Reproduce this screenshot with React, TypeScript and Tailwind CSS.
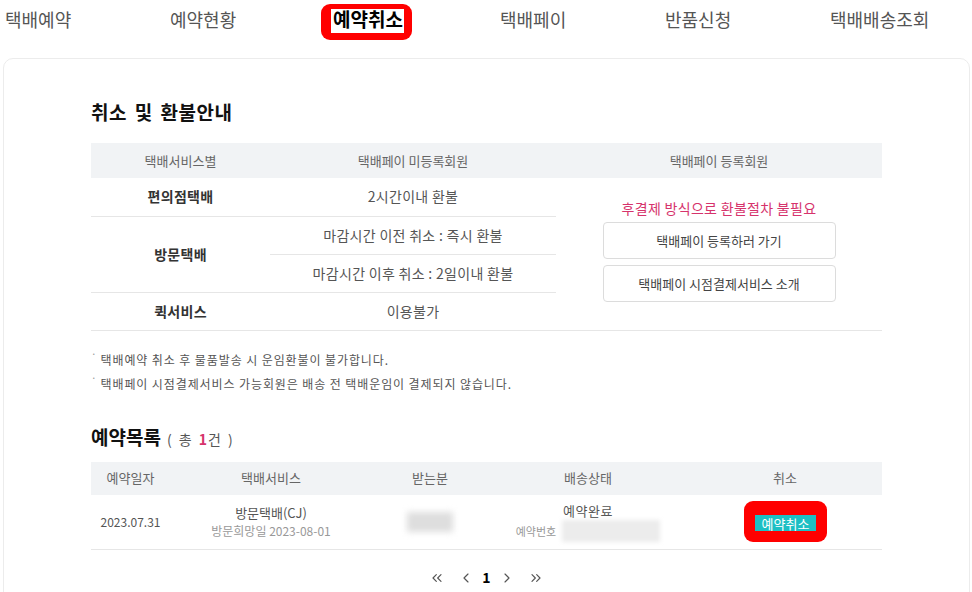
import { ChevronLeft, ChevronRight, ChevronsLeft, ChevronsRight } from 'lucide-react';

const tabs = ['택배예약', '예약현황', '예약취소', '택배페이', '반품신청', '택배배송조회'];

const notes = [
  '택배예약 취소 후 물품발송 시 운임환불이 불가합니다.',
  '택배페이 시점결제서비스 가능회원은 배송 전 택배운임이 결제되지 않습니다.',
];

export default function App() {
  return (
    <div className="min-h-[592px] bg-white font-['Noto_Sans_CJK_KR','Noto_Sans',sans-serif] text-[#333]">
      <nav className="flex h-[38px] items-center pl-[5px]">
        {tabs.map((t) => (
          <div key={t} className="w-[165px] shrink-0">
            {t === '예약취소' ? (
              <span className="relative z-0 -ml-[2px] inline-block text-[19px] font-bold leading-[24px] text-black">
                <span className="absolute -left-[12px] -right-[9px] -top-[3px] -bottom-[9px] -z-10 rounded-[9px] bg-[#ff0000]" />
                <span className="absolute -left-[2px] -right-[1px] top-[2px] -bottom-[2px] -z-10 bg-white" />
                {t}
              </span>
            ) : (
              <span className="text-[18px] leading-[24px] text-[#555]">{t}</span>
            )}
          </div>
        ))}
      </nav>

      <div className="ml-[3px] mr-[2px] mt-[20px] rounded-[10px] border border-[#ececec] px-[87px] pb-[40px] pt-[39px]">
        <h2 className="text-[19px] font-bold leading-[28px] tracking-[0.5px] text-[#111] [word-spacing:3px]">취소 및 환불안내</h2>

        <table className="mt-[17px] w-full table-fixed border-collapse text-center text-[14px] text-[#555]">
          <colgroup>
            <col className="w-[179px]" />
            <col className="w-[286px]" />
            <col />
          </colgroup>
          <thead>
            <tr className="h-[35px] bg-[#f1f3f5] text-[13px] text-[#666]">
              <th className="font-normal">택배서비스별</th>
              <th className="font-normal">택배페이 미등록회원</th>
              <th className="font-normal">택배페이 등록회원</th>
            </tr>
          </thead>
          <tbody className="tracking-[0.3px]">
            <tr className="h-[38px]">
              <td className="border-b border-[#e6e6e6] font-bold text-[#333]">편의점택배</td>
              <td className="border-b border-[#e6e6e6]">2시간이내 환불</td>
              <td rowSpan={4} className="border-b border-[#e6e6e6] pt-[21px] align-top">
                <p className="leading-[18px] text-[#d6336c]">후결제 방식으로 환불절차 불필요</p>
                <div className="mt-[5px] flex flex-col items-center gap-[6px] tracking-normal">
                  <button className="h-[37px] w-[233px] rounded-[4px] border border-[#dcdcdc] bg-white text-[13px] text-[#444]">
                    택배페이 등록하러 가기
                  </button>
                  <button className="h-[37px] w-[233px] rounded-[4px] border border-[#dcdcdc] bg-white text-[13px] text-[#444]">
                    택배페이 시점결제서비스 소개
                  </button>
                </div>
              </td>
            </tr>
            <tr className="h-[38px]">
              <td rowSpan={2} className="border-b border-[#e6e6e6] font-bold text-[#333]">방문택배</td>
              <td className="border-b border-[#e6e6e6]">마감시간 이전 취소 : 즉시 환불</td>
            </tr>
            <tr className="h-[38px]">
              <td className="border-b border-[#e6e6e6]">마감시간 이후 취소 : 2일이내 환불</td>
            </tr>
            <tr className="h-[38px]">
              <td className="border-b border-[#e6e6e6] font-bold text-[#333]">퀵서비스</td>
              <td className="border-b border-[#e6e6e6]">이용불가</td>
            </tr>
          </tbody>
        </table>

        <ul className="mt-[17px] text-[12px] leading-[24px] tracking-[0.9px] text-[#555]">
          {notes.map((n) => (
            <li key={n} className="flex">
              <span className="mr-[3px] -mt-[6px] text-[10px] text-[#999]">·</span>
              {n}
            </li>
          ))}
        </ul>

        <div className="mt-[27px] flex items-baseline">
          <h2 className="text-[19px] font-bold leading-[28px] text-[#111]">예약목록</h2>
          <span className="ml-[6px] text-[14px] tracking-[1px] text-[#555] [word-spacing:2px]">
            ( 총 <b className="text-[#d6336c]">1</b>건 )
          </span>
        </div>

        <table className="mt-[11px] w-full table-fixed border-collapse text-center text-[13px] text-[#555]">
          <colgroup>
            <col className="w-[79px]" />
            <col className="w-[202px]" />
            <col className="w-[116px]" />
            <col className="w-[200px]" />
            <col />
          </colgroup>
          <thead>
            <tr className="h-[33px] bg-[#f1f3f5] text-[#666]">
              <th className="font-normal">예약일자</th>
              <th className="font-normal">택배서비스</th>
              <th className="font-normal">받는분</th>
              <th className="font-normal">배송상태</th>
              <th className="font-normal">취소</th>
            </tr>
          </thead>
          <tbody>
            <tr className="h-[55px]">
              <td className="border-b border-[#e6e6e6] text-[12px] text-[#555]">2023.07.31</td>
              <td className="border-b border-[#e6e6e6]">
                <p className="leading-[18px] text-[#555]">방문택배(CJ)</p>
                <p className="text-[12px] leading-[18px] text-[#999]">방문희망일 2023-08-01</p>
              </td>
              <td className="border-b border-[#e6e6e6]">
                <div className="mx-auto h-[20px] w-[46px] bg-[#dedede] blur-[3px]" />
              </td>
              <td className="border-b border-[#e6e6e6]">
                <p className="leading-[18px] tracking-[0.5px] text-[#555]">예약완료</p>
                <div className="flex items-center justify-center">
                  <span className="text-[11px] leading-[18px] text-[#999]">예약번호</span>
                  <span className="ml-[6px] h-[22px] w-[98px] bg-[#ececec] blur-[2px]" />
                </div>
              </td>
              <td className="border-b border-[#e6e6e6]">
                <div className="mx-auto flex h-[41px] w-[83px] items-center justify-center rounded-[9px] bg-[#ff0000] pb-[2px] pl-[1px] pt-[5px]">
                  <span className="flex h-[16px] w-[61px] items-center justify-center bg-[#1dbfc4] text-[13px] text-white">
                    예약취소
                  </span>
                </div>
              </td>
            </tr>
          </tbody>
        </table>

        <div className="mt-[17px] flex items-center justify-center text-[#555]">
          <ChevronsLeft size={16} strokeWidth={1.75} />
          <ChevronLeft size={16} strokeWidth={1.75} className="ml-[13px]" />
          <span className="mx-[8px] text-[14px] font-bold text-black">1</span>
          <ChevronRight size={16} strokeWidth={1.75} />
          <ChevronsRight size={16} strokeWidth={1.75} className="ml-[13px]" />
        </div>
      </div>
    </div>
  );
}
